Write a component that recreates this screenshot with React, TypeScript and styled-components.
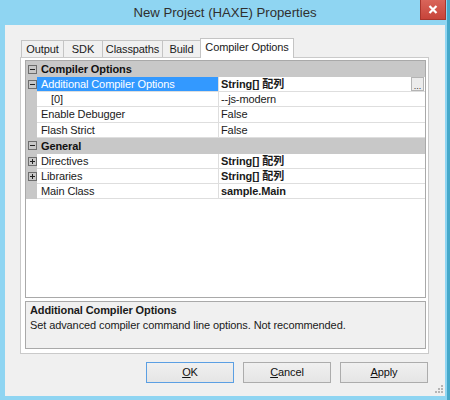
import styled, { createGlobalStyle } from 'styled-components';

const GlobalStyle = createGlobalStyle`
  html, body {
    margin: 0;
    padding: 0;
    background: #8fd5f2;
  }
  body {
    font-family: "Liberation Sans", "Noto Sans CJK JP", sans-serif;
    font-size: 11px;
    letter-spacing: -0.1px;
    color: #000000;
  }
`;

const Window = styled.div`
  width: 450px;
  height: 400px;
  box-sizing: border-box;
  display: flex;
  flex-direction: column;
  background: #8fd5f2;
  border-right: 3px solid #45a8c9;
`;

const TitleBar = styled.div`
  position: relative;
  height: 25px;
  flex: none;
  display: flex;
  align-items: center;
  justify-content: center;
  padding-left: 3px;
  font-size: 13.2px;
  letter-spacing: 0;
  line-height: 25px;
  color: #2f2f2f;
`;

const CloseButton = styled.div`
  position: absolute;
  top: 0;
  right: 1px;
  width: 26px;
  height: 20px;
  box-sizing: border-box;
  display: flex;
  align-items: center;
  justify-content: center;
  background: linear-gradient(#d9655a, #c7443a);
  border: 1px solid #a8362d;
  border-top: none;
`;

const Client = styled.div`
  position: relative;
  flex: 1;
  margin: 0 2px 4px 5px;
  padding: 13px 16px 0 15px;
  background: #f0f0f0;
  display: flex;
  flex-direction: column;
`;

const TabStrip = styled.div`
  position: relative;
  z-index: 1;
  height: 19px;
  flex: none;
  display: flex;
  align-items: flex-end;
  padding-left: 1px;
`;

const Tab = styled.div<{ $width: number; $active?: boolean }>`
  width: ${(p) => p.$width}px;
  height: ${(p) => (p.$active ? 20 : 17)}px;
  box-sizing: border-box;
  margin-left: -1px;
  margin-bottom: ${(p) => (p.$active ? -1 : 0)}px;
  padding-bottom: ${(p) => (p.$active ? 2 : 0)}px;
  border: 1px solid #c4c4c4;
  border-bottom: none;
  background: ${(p) => (p.$active ? '#ffffff' : '#f0f0f0')};
  display: flex;
  align-items: center;
  justify-content: center;
  white-space: nowrap;
  line-height: 15px;
  color: #1a1a1a;

  &:first-child {
    margin-left: 0;
  }
`;

const Panel = styled.div`
  height: 297px;
  flex: none;
  box-sizing: border-box;
  border: 1px solid #cacaca;
  background: #ffffff;
  padding: 2px 2px 4px 4px;
  display: flex;
  flex-direction: column;
  gap: 3px;
`;

const Grid = styled.div`
  height: 238px;
  flex: none;
  box-sizing: border-box;
  border: 1px solid #a9a9a9;
  background: #ffffff;
  display: flex;
  flex-direction: column;
`;

const CategoryRow = styled.div`
  height: 16px;
  flex: none;
  display: flex;
  background: #c8c8c8;
  font-weight: bold;
  line-height: 16px;
`;

const PropRow = styled.div`
  height: 15.2px;
  flex: none;
  display: flex;
  line-height: 14px;
`;

const Gutter = styled.div`
  width: 11px;
  flex: none;
  box-sizing: border-box;
  padding-left: 2px;
  background: #c8c8c8;
  display: flex;
  align-items: center;
`;

const CategoryLabel = styled.div`
  flex: 1;
  padding-left: 4px;
  color: #111111;
`;

const Label = styled.div<{ $selected?: boolean; $indent?: number }>`
  width: 182px;
  flex: none;
  box-sizing: border-box;
  padding-left: ${(p) => 4 + (p.$indent ?? 0)}px;
  border-right: 1px solid #dedede;
  border-bottom: 1px solid #dedede;
  background: ${(p) => (p.$selected ? '#3399ff' : '#ffffff')};
  color: ${(p) => (p.$selected ? '#ffffff' : '#1a1a1a')};
  white-space: nowrap;
  overflow: hidden;
`;

const Value = styled.div<{ $bold?: boolean }>`
  flex: 1;
  display: flex;
  align-items: stretch;
  padding-left: 2px;
  border-bottom: 1px solid #dedede;
  font-weight: ${(p) => (p.$bold ? 'bold' : 'normal')};
  color: #1a1a1a;
  white-space: nowrap;
`;

const ValueText = styled.span`
  flex: 1;
`;

const EllipsisButton = styled.div`
  width: 13px;
  flex: none;
  margin-right: 1px;
  box-sizing: border-box;
  border: 1px solid #b4b4b4;
  background: #ececec;
  font-size: 9px;
  font-weight: normal;
  letter-spacing: 0;
  line-height: 16px;
  text-align: center;
  color: #333333;
`;

const GridFill = styled.div`
  flex: 1;
  background: #ffffff;
`;

const Description = styled.div`
  height: 48px;
  flex: none;
  box-sizing: border-box;
  border: 1px solid #a9a9a9;
  background: #f0f0f0;
  padding: 1px 4px;
  line-height: 15px;
  color: #1a1a1a;
`;

const DescTitle = styled.div`
  font-weight: bold;
`;

const ButtonRow = styled.div`
  display: flex;
  justify-content: flex-end;
  gap: 9px;
  margin-top: 8px;
  padding-right: 1px;
`;

const DialogButton = styled.div<{ $default?: boolean }>`
  width: 88px;
  height: 21px;
  box-sizing: border-box;
  border: 1px solid ${(p) => (p.$default ? '#5b9fe3' : '#acacac')};
  background: linear-gradient(#f0f0f0, #e5e5e5);
  display: flex;
  align-items: center;
  justify-content: center;
  line-height: 15px;
  color: #111111;
`;

const SizeGrip = styled.svg`
  position: absolute;
  right: 1px;
  bottom: 2px;
`;

function ToggleBox({ open }: { open: boolean }) {
  return (
    <svg width="9" height="9" viewBox="0 0 9 9">
      <rect x="0.5" y="0.5" width="8" height="8" fill="none" stroke="#6e6e6e" />
      <path d="M2 4.5H7" stroke="#222" />
      {!open && <path d="M4.5 2V7" stroke="#222" />}
    </svg>
  );
}

type Prop = {
  label: string;
  value: string;
  bold?: boolean;
  indent?: number;
  selected?: boolean;
  toggle?: 'open' | 'closed';
  ellipsis?: boolean;
};

const sections: { name: string; props: Prop[] }[] = [
  {
    name: 'Compiler Options',
    props: [
      { label: 'Additional Compiler Options', value: 'String[] 配列', bold: true, selected: true, toggle: 'open', ellipsis: true },
      { label: '[0]', value: '--js-modern', indent: 10 },
      { label: 'Enable Debugger', value: 'False' },
      { label: 'Flash Strict', value: 'False' },
    ],
  },
  {
    name: 'General',
    props: [
      { label: 'Directives', value: 'String[] 配列', bold: true, toggle: 'closed' },
      { label: 'Libraries', value: 'String[] 配列', bold: true, toggle: 'closed' },
      { label: 'Main Class', value: 'sample.Main', bold: true },
    ],
  },
];

const tabs = [
  { label: 'Output', width: 43 },
  { label: 'SDK', width: 40 },
  { label: 'Classpaths', width: 61 },
  { label: 'Build', width: 39 },
  { label: 'Compiler Options', width: 94, active: true },
];

function App() {
  return (
    <Window>
      <GlobalStyle />
      <TitleBar>
        New Project (HAXE) Properties
        <CloseButton>
          <svg width="10" height="9" viewBox="0 0 10 9">
            <path d="M1.5 1L8.5 8M8.5 1L1.5 8" stroke="#ffffff" strokeWidth="2.2" />
          </svg>
        </CloseButton>
      </TitleBar>
      <Client>
        <TabStrip>
          {tabs.map((t) => (
            <Tab key={t.label} $width={t.width} $active={t.active}>
              {t.label}
            </Tab>
          ))}
        </TabStrip>
        <Panel>
          <Grid>
            {sections.map((s) => (
              <div key={s.name}>
                <CategoryRow>
                  <Gutter>
                    <ToggleBox open />
                  </Gutter>
                  <CategoryLabel>{s.name}</CategoryLabel>
                </CategoryRow>
                {s.props.map((p) => (
                  <PropRow key={p.label}>
                    <Gutter>{p.toggle && <ToggleBox open={p.toggle === 'open'} />}</Gutter>
                    <Label $selected={p.selected} $indent={p.indent}>
                      {p.label}
                    </Label>
                    <Value $bold={p.bold}>
                      <ValueText>{p.value}</ValueText>
                      {p.ellipsis && <EllipsisButton>...</EllipsisButton>}
                    </Value>
                  </PropRow>
                ))}
              </div>
            ))}
            <GridFill />
          </Grid>
          <Description>
            <DescTitle>Additional Compiler Options</DescTitle>
            <div>Set advanced compiler command line options. Not recommended.</div>
          </Description>
        </Panel>
        <ButtonRow>
          <DialogButton $default>
            <span>
              <u>O</u>K
            </span>
          </DialogButton>
          <DialogButton>
            <span>
              <u>C</u>ancel
            </span>
          </DialogButton>
          <DialogButton>
            <span>
              <u>A</u>pply
            </span>
          </DialogButton>
        </ButtonRow>
        <SizeGrip width="10" height="10" viewBox="0 0 10 10">
          <rect x="7" y="1" width="2" height="2" fill="#b5b5b5" />
          <rect x="4" y="4" width="2" height="2" fill="#b5b5b5" />
          <rect x="7" y="4" width="2" height="2" fill="#b5b5b5" />
          <rect x="1" y="7" width="2" height="2" fill="#b5b5b5" />
          <rect x="4" y="7" width="2" height="2" fill="#b5b5b5" />
          <rect x="7" y="7" width="2" height="2" fill="#b5b5b5" />
        </SizeGrip>
      </Client>
    </Window>
  );
}

export default App;
